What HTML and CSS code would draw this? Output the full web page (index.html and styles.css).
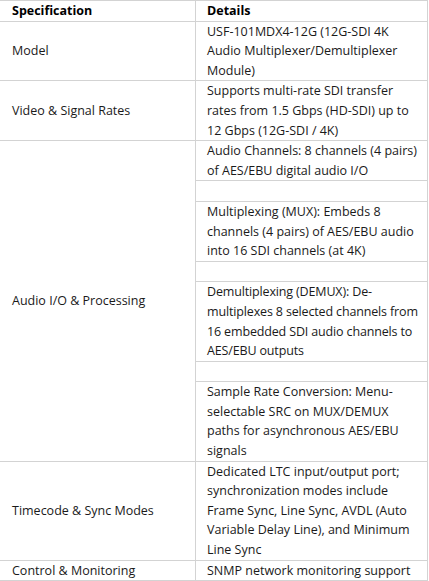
FILE: index.html
```html
<!DOCTYPE html>
<html lang="en">

<head>
    <meta charset="UTF-8">
    <meta name="viewport" content="width=device-width, initial-scale=1.0">
    <title>Specifications</title>
    <link rel="stylesheet" href="styles.css">
</head>

<body>
    <table class="spec-table">
        <thead>
            <tr>
                <th class="col-name">Specification</th>
                <th class="col-detail">Details</th>
            </tr>
        </thead>
        <tbody>
            <tr>
                <td class="col-name">Model</td>
                <td class="col-detail">USF-101MDX4-12G (12G-SDI 4K Audio Multiplexer/Demultiplexer Module)</td>
            </tr>
            <tr>
                <td class="col-name">Video &amp; Signal Rates</td>
                <td class="col-detail">Supports multi-rate SDI transfer rates from 1.5 Gbps (HD-SDI) up to 12 Gbps (12G-SDI / 4K)</td>
            </tr>
            <tr>
                <td class="col-name" rowspan="7">Audio I/O &amp; Processing</td>
                <td class="col-detail">Audio Channels: 8 channels (4 pairs) of AES/EBU digital audio I/O</td>
            </tr>
            <tr><td class="col-detail empty"></td></tr>
            <tr>
                <td class="col-detail">Multiplexing (MUX): Embeds 8 channels (4 pairs) of AES/EBU audio into 16 SDI channels (at 4K)</td>
            </tr>
            <tr><td class="col-detail empty"></td></tr>
            <tr>
                <td class="col-detail tight">Demultiplexing (DEMUX): De-multiplexes 8 selected channels from 16 embedded SDI audio channels to AES/EBU outputs</td>
            </tr>
            <tr><td class="col-detail empty"></td></tr>
            <tr>
                <td class="col-detail">Sample Rate Conversion: Menu-selectable SRC on MUX/DEMUX paths for asynchronous AES/EBU signals</td>
            </tr>
            <tr>
                <td class="col-name">Timecode &amp; Sync Modes</td>
                <td class="col-detail">Dedicated LTC input/output port; synchronization modes include Frame Sync, Line Sync, AVDL (Auto Variable Delay Line), and Minimum Line Sync</td>
            </tr>
            <tr>
                <td class="col-name">Control &amp; Monitoring</td>
                <td class="col-detail">SNMP network monitoring support</td>
            </tr>
        </tbody>
    </table>
</body>

</html>
```

FILE: styles.css
```css
body {
    margin: 0;
    background-color: #ffffff;
    font-family: "Open Sans", "Noto Sans", sans-serif;
    font-size: 12.5px;
    color: #1a1a1a;
}

.spec-table {
    width: 428px;
    border-collapse: collapse;
    table-layout: fixed;
}

th,
td {
    border: 1px solid #d3d3d3;
    padding: 0 4px 0 11px;
    line-height: 19.6px;
    text-align: left;
    vertical-align: middle;
}

th {
    font-weight: bold;
    color: #000000;
}

.col-name {
    width: 179px;
    padding-left: 12px;
    border-left: none;
}

.col-detail {
    vertical-align: top;
}

/* keeps "from" on the second line like the source table */
.tight {
    letter-spacing: -0.15px;
}

.empty {
    height: 19.6px;
}
```
